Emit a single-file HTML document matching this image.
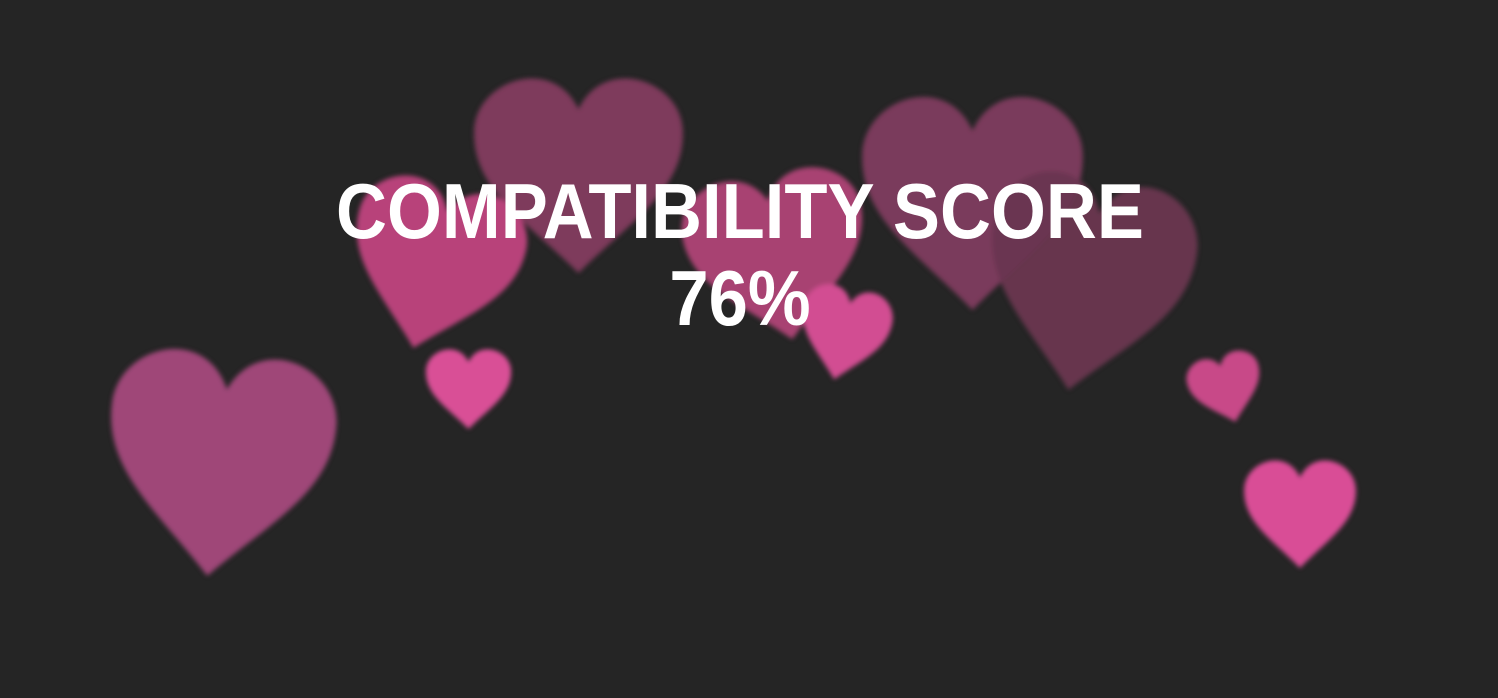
<!DOCTYPE html>
<html><head><meta charset="utf-8"><style>
html,body{margin:0;padding:0;width:1498px;height:698px;background:#252525;overflow:hidden}
svg{position:absolute;left:0;top:0}
.t{position:absolute;left:0;width:1480px;text-align:center;color:#fff;font-family:"Liberation Sans",sans-serif;font-weight:bold;font-size:78px;line-height:87px;top:168px;transform:scaleX(0.905);transform-origin:740px 0}
</style></head><body>
<svg width="1498" height="698" viewBox="0 0 1498 698">
<defs>
<filter id="b" x="-20%" y="-20%" width="140%" height="140%"><feGaussianBlur stdDeviation="2.5"/></filter>
<path id="h" d="M50 100 C 25 75 0 60 1 32 C 2 8 38 -4 50 22 C 62 -4 98 8 99 32 C 100 60 75 75 50 100Z"/>
</defs>
<g filter="url(#b)">
<use href="#h" transform="translate(472,63) scale(2.13,2.1)" fill="#7e3a5c"/>
<use href="#h" transform="translate(860,80) scale(2.25,2.3)" fill="#7a3a5c"/>
<use href="#h" transform="translate(1005,145) rotate(10) scale(2.1,2.3)" fill="#6a3550" opacity="0.95"/>
<use href="#h" transform="translate(372,152) rotate(14) scale(1.75,1.8)" fill="#b8427a"/>
<use href="#h" transform="translate(670,178) rotate(-10) scale(1.85,1.8)" fill="#a84272"/>
<use href="#h" transform="translate(810,272) rotate(12) scale(0.92,1.0)" fill="#d24e92"/>
<use href="#h" transform="translate(118,325) rotate(6) scale(2.3,2.4)" fill="#9f4778"/>
<use href="#h" transform="translate(425,343) scale(0.87,0.86)" fill="#d94f96"/>
<use href="#h" transform="translate(1180,360) rotate(-15) scale(0.75,0.74)" fill="#c84a88"/>
<use href="#h" transform="translate(1243,452) scale(1.14,1.16)" fill="#d94d96"/>
</g>
</svg>
<div class="t">COMPATIBILITY SCORE<br>76%</div>
</body></html>
